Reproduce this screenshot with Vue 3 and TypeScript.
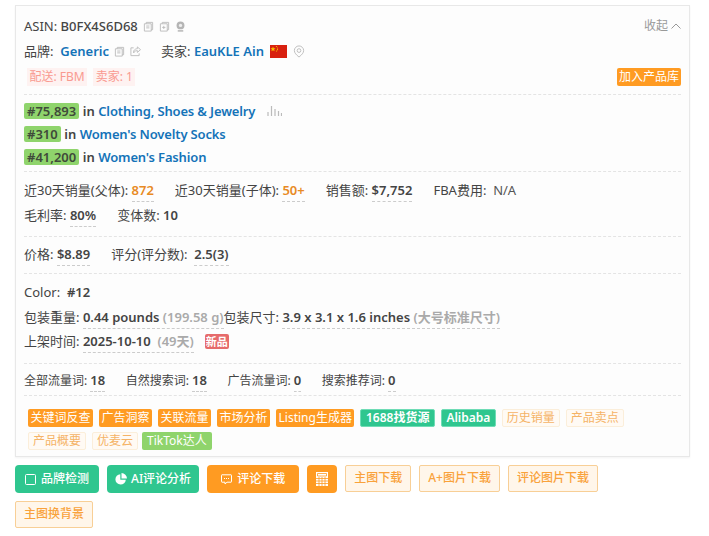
<script setup lang="ts">
const ranks = [
  { rank: '#75,893', cat: 'Clothing, Shoes & Jewelry', chart: true },
  { rank: '#310', cat: "Women's Novelty Socks", chart: false },
  { rank: '#41,200', cat: "Women's Fashion", chart: false },
]
const traffic = [
  { k: '全部流量词:', v: '18' },
  { k: '自然搜索词:', v: '18' },
  { k: '广告流量词:', v: '0' },
  { k: '搜索推荐词:', v: '0' },
]
const tagRow = [
  { t: '关键词反查', c: 'orange' },
  { t: '广告洞察', c: 'orange' },
  { t: '关联流量', c: 'orange' },
  { t: '市场分析', c: 'orange' },
  { t: 'Listing生成器', c: 'orange' },
  { t: '1688找货源', c: 'teal' },
  { t: 'Alibaba', c: 'teal' },
  { t: '历史销量', c: 'ghost' },
  { t: '产品卖点', c: 'ghost' },
  { t: '产品概要', c: 'ghost' },
  { t: '优麦云', c: 'ghost' },
  { t: 'TikTok达人', c: 'green' },
]
</script>

<template>
  <div class="page">
    <section class="card">
      <div class="row r-asin">
        <span class="lbl">ASIN:</span>&nbsp;<span class="asin">B0FX4S6D68</span>
        <svg class="ic first" viewBox="0 0 12 12"><path d="M3.500 3V1.500h7v8H9M1.500 3h7.500v8h-7.500zM3.500 5.500h3.500M3.500 7.500h3.500"/></svg>
        <svg class="ic" viewBox="0 0 12 12"><path d="M3.500 3V1.500h7v8H9M1.500 3h7.500v8h-7.500zM5.200 5.300v3.400M3.500 7h3.500"/></svg>
        <svg class="ic solid" viewBox="0 0 12 12"><circle cx="6" cy="4.800" r="4.300" fill="#b5b5b5"/><circle cx="6" cy="4.800" r="1.800" fill="#eee"/><path d="M3 10.800h6" stroke="#b5b5b5" stroke-width="1.600"/></svg>
        <span class="collapse">收起<svg width="10" height="6" viewBox="0 0 10 6"><path d="M.5 5.500 5 1l4.500 4.500" fill="none" stroke="#999" stroke-width="1"/></svg></span>
      </div>
      <div class="row r-brand">
        <span class="lbl">品牌:</span>&nbsp;&nbsp;<a class="link">Generic</a>
        <svg class="ic first b" viewBox="0 0 12 12"><path d="M3.500 3V1.500h7v8H9M1.500 3h7.500v8h-7.500zM3.500 5.500h3.500M3.500 7.500h3.500"/></svg>
        <svg class="ic" viewBox="0 0 12 12"><path d="M4 5.500C5 3.500 6.500 3 8 3V1l3.500 3L8 7V5C6.500 5 5 5.500 4 7.500zM4 2H1v8.500h9V8"/></svg>
        <span class="lbl seller">卖家:</span>&nbsp;<a class="link">EauKLE Ain</a>
        <svg class="flag" width="17" height="13" viewBox="0 0 17 13"><rect width="17" height="13" fill="#d8200f"/><path d="M3 1.500l.7 1.700 1.800.1-1.400 1.100.5 1.800L3 5.200l-1.600 1 .5-1.800L.5 3.300l1.800-.1z" fill="#f5c400"/><circle cx="6.500" cy="1.500" r=".6" fill="#f5c400"/><circle cx="7.500" cy="3" r=".6" fill="#f5c400"/><circle cx="7.500" cy="4.700" r=".6" fill="#f5c400"/><circle cx="6.500" cy="6" r=".6" fill="#f5c400"/></svg>
        <svg class="pin" viewBox="0 0 12 14"><path d="M6 13C3 10.500 1 8.500 1 6a5 5 0 0 1 10 0c0 2.500-2 4.500-5 7z"/><circle cx="6" cy="6" r="2"/></svg>
      </div>
      <div class="row r-badges">
        <span class="pink">配送: FBM</span>
        <span class="pink">卖家: 1</span>
        <span class="add">加入产品库</span>
      </div>

      <div class="sec ranks">
        <div v-for="r in ranks" :key="r.rank" class="rank">
          <span class="rk">{{ r.rank }}</span>
          <b class="in">in</b>
          <a class="link cat">{{ r.cat }}</a>
          <svg v-if="r.chart" class="bars" viewBox="0 0 15 12"><path d="M1 7v4M4.500 1v10M8 4v7M11.500 6v5M14.500 8v3"/></svg>
        </div>
      </div>

      <div class="sec sales">
        <div class="line">
          <span class="item">近30天销量(父体): <b class="u or">872</b></span>
          <span class="item">近30天销量(子体): <b class="u or">50+</b></span>
          <span class="item">销售额: <b class="u">$7,752</b></span>
          <span class="item">FBA费用:&nbsp; <span class="val">N/A</span></span>
        </div>
        <div class="line">
          <span class="item">毛利率: <b class="u">80%</b></span>
          <span class="item">变体数: <b>10</b></span>
        </div>
      </div>

      <div class="sec price">
        <div class="line">
          <span class="item">价格: <b class="u">$8.89</b></span>
          <span class="item">评分(评分数):&nbsp; <b class="u">2.5(3)</b></span>
        </div>
      </div>

      <div class="sec spec">
        <div class="line">Color:&nbsp; <b>#12</b></div>
        <div class="line">包装重量: <b class="u">0.44 pounds <em>(199.58 g)</em></b>包装尺寸: <b class="u">3.9 x 3.1 x 1.6 inches <em>(大号标准尺寸)</em></b></div>
        <div class="line">上架时间: <b class="u">2025-10-10&nbsp; <em>(49天)</em></b><span class="new">新品</span></div>
      </div>

      <div class="sec traffic">
        <span v-for="t in traffic" :key="t.k" class="item">{{ t.k }} <b class="u">{{ t.v }}</b></span>
      </div>

      <div class="sec tags">
        <span v-for="t in tagRow" :key="t.t" class="tag" :class="t.c">{{ t.t }}</span>
      </div>
    </section>

    <div class="btns">
      <button class="btn teal">
        <svg width="11" height="11" viewBox="0 0 11 11"><rect x=".5" y=".5" width="10" height="10" rx="1" fill="none" stroke="#fff"/></svg>
        品牌检测
      </button>
      <button class="btn teal ai">
        <svg width="12" height="12" viewBox="0 0 12 12"><path d="M5.300 1.200a5.200 5.200 0 1 0 5.500 5.500H5.300zM6.500 0v5.500H12A5.600 5.600 0 0 0 6.500 0z" fill="#fff"/></svg>
        AI评论分析
      </button>
      <button class="btn orange wide">
        <svg width="11" height="11" viewBox="0 0 11 11"><path d="M1 .8h9a.5.500 0 0 1 .5.500v6.400a.5.500 0 0 1-.5.500H6L4 10V8.200H1a.5.500 0 0 1-.5-.5V1.300A.5.500 0 0 1 1 .8z" fill="none" stroke="#fff"/><path d="M3 4.500h1M5 4.500h1M7 4.500h1" stroke="#fff"/></svg>
        评论下载
      </button>
      <button class="btn orange square">
        <svg width="12" height="14" viewBox="0 0 12 14"><path d="M0 0h12v14H0z" fill="#fff"/><path d="M1.500 1.500h9v2.500h-9zM0 6.500h12M0 9h12M0 11.500h12M3 5v9M6 5v9M9 5v9" fill="none" stroke="#ff9b22" stroke-width=".8"/></svg>
      </button>
      <button class="btn line-o">主图下载</button>
      <button class="btn line-o">A+图片下载</button>
      <button class="btn line-o">评论图片下载</button>
      <button class="btn line-o">主图换背景</button>
    </div>
  </div>
</template>

<style>
html, body { background: #fff; }
</style>

<style scoped>
.page {
  width: 709px;
  height: 536px;
  box-sizing: border-box;
  padding: 5px 19px 0 15px;
  overflow: hidden;
  font-family: "Noto Sans", "Noto Sans CJK SC", sans-serif;
  font-size: 13px;
  line-height: 18px;
  color: #444;
}
.card {
  box-sizing: border-box;
  width: 675px;
  height: 452px;
  padding: 10px 8px 0 8px;
  background: #fdfdfd;
  border: 1px solid #e8e8e8;
  box-shadow: 0 1px 2px rgba(0, 0, 0, .05);
}
.row { display: flex; align-items: center; white-space: pre; }
.r-asin { height: 20px; }
.asin { font-weight: 500; }
.collapse { margin-left: auto; color: #999; display: flex; align-items: center; gap: 3px; font-size: 12px; white-space: normal; }
.r-brand { height: 20px; margin-top: 5px; }
.r-badges { height: 18px; margin-top: 7px; gap: 6px; padding-left: 3px; font-size: 12px; }
.link { color: #1473b8; font-weight: 600; }
.cat { letter-spacing: -.15px; }
.ic { width: 11px; height: 11px; margin-left: 5px; fill: none; stroke: #bbb; stroke-width: 1; flex: none; }
.ic.first { margin-left: 5px; }
.ic.first.b { margin-left: 5px; }
.ic.solid { stroke: none; }
.seller { margin-left: 20px; }
.flag { margin-left: 6px; }
.pin { width: 12px; height: 13px; margin-left: 6px; fill: none; stroke: #bbb; }
.pink { background: #fef2f1; color: #f99a90; padding: 0 2.500px; height: 18px; }
.add {
  margin-left: auto;
  background: #ff9b22;
  color: #fff;
  border-radius: 2px;
  padding: 0 2px;
  height: 18px;
}
.sec { border-top: 1px dashed #e4e4e4; }
.ranks { margin-top: 8px; padding-top: 4px; height: 77px; box-sizing: border-box; }
.rank { display: flex; align-items: center; height: 23px; white-space: pre; font-weight: 600; }
.rk { background: #8fd46c; color: #3f4a3a; border-radius: 2px; padding: 0 3px; height: 16px; line-height: 16px; }
.in { margin: 0 3.500px; font-weight: 600; }
.bars { width: 15px; height: 12px; margin-left: 12px; fill: none; stroke: #bbb; stroke-width: 1.200; }
b { font-weight: 600; color: #444; }
em { font-style: normal; color: #aaa; font-weight: 600; }
.u { border-bottom: 1px dashed #ccc; padding-bottom: 2px; }
.or { color: #e88a24; }
.val { color: #555; }
.sales { height: 65px; padding-top: 8px; box-sizing: border-box; }
.line { height: 25px; line-height: 20px; white-space: pre; }
.item { margin-right: 21px; }
.price { height: 37px; padding-top: 7px; box-sizing: border-box; }
.spec { height: 90px; padding-top: 8px; box-sizing: border-box; }
.spec .line { height: 24.500px; }
.new {
  display: inline-block;
  margin-left: 11px;
  background: #e66b6b;
  color: #fff;
  font-size: 11px;
  line-height: 15px;
  padding: 0 1px;
  border-radius: 2px;
  font-weight: 700;
}
.traffic { height: 32px; padding-top: 7px; box-sizing: border-box; white-space: pre; font-size: 12px; }
.traffic b { font-size: 13px; }
.traffic .item { margin-right: 20.500px; }
.tags { display: flex; flex-wrap: wrap; gap: 5px 6px; padding: 13px 0 0 4px; font-size: 12px; }
.tag {
  height: 18px;
  line-height: 16px;
  box-sizing: border-box;
  padding: 0 2px;
  border: 1px solid transparent;
  border-radius: 2px;
  color: #fff;
}
.tag.orange { background: #ff9b22; border: 0; padding: 0 2.500px; line-height: 18px; }
.tag.teal { background: #2fc68f; border-color: #6fdcb6; font-weight: 600; padding: 0 4.500px; }
.tag.ghost { background: #fffaf4; border-color: #fbeeda; color: #f5b366; padding: 0 4px; }
.tag.green { background: #8fd46c; padding: 0 4px; margin-left: -2px; }
.btns { display: flex; flex-wrap: wrap; gap: 8px 8px; margin-top: 8px; font-size: 12px; max-width: 640px; }
.btn {
  height: 28px;
  box-sizing: border-box;
  border: 1px solid transparent;
  border-radius: 4px;
  font: inherit;
  font-weight: 500;
  color: #fff;
  padding: 0 9px;
  display: flex;
  align-items: center;
  gap: 5px;
}
.btn.teal { background: #2fc68f; }
.btn.teal.ai { padding: 0 7px; gap: 4px; }
.btn.orange { background: #ff9b22; }
.btn.wide { padding: 0 13px; }
.btn.square { width: 30px; padding: 0; justify-content: center; }
.btn.line-o { background: #fff6ea; border-color: #f8cf96; color: #f9a23b; border-radius: 2px; height: 26.500px; padding: 0 8px; }
</style>
